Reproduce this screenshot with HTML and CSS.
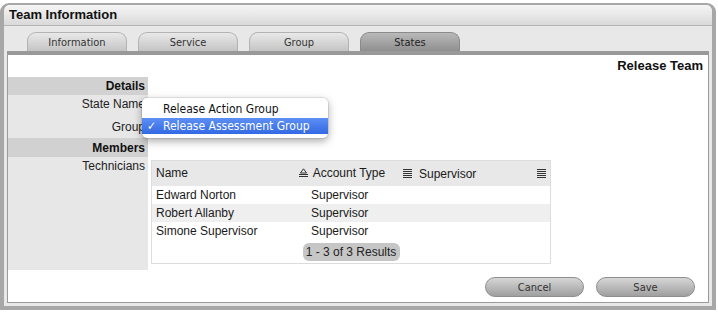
FILE: index.html
```html
<!DOCTYPE html>
<html lang="en">
<head>
    <meta charset="UTF-8">
    <title>Team Information</title>
    <link rel="stylesheet" href="styles.css">
</head>
<body>
    <div class="window">
        <div class="title">Team Information</div>
        <div class="body">
            <div class="tabs">
                <div class="tab">Information</div>
                <div class="tab">Service</div>
                <div class="tab">Group</div>
                <div class="tab active">States</div>
            </div>

            <div class="content">
                <div class="team-name">Release Team</div>

                <div class="form">
                    <div class="label section">Details</div>
                    <div class="value"></div>

                    <div class="label row-name">State Name</div>
                    <div class="value"></div>

                    <div class="label row-group">Group</div>
                    <div class="value"></div>

                    <div class="label section">Members</div>
                    <div class="value"></div>

                    <div class="label row-tech">Technicians</div>
                    <div class="value">
                        <div class="grid">
                            <div class="grid-head">
                                <div class="cell">Name</div>
                                <div class="cell">
                                    <svg class="icon" width="9" height="9" viewBox="0 0 9 9">
                                        <path d="M4.5 0.8 L7.6 5 L1.4 5 Z" fill="none" stroke="#333" stroke-width="1"/>
                                        <path d="M0 6.5 H9 M0 8.5 H9" stroke="#333" stroke-width="1"/>
                                    </svg>
                                    Account Type
                                </div>
                                <div class="cell">
                                    <svg class="icon" width="9" height="9" viewBox="0 0 9 9">
                                        <path d="M0 0.5 H9 M0 2.5 H9 M0 4.5 H9 M0 6.5 H9 M0 8.5 H9" stroke="#333" stroke-width="1"/>
                                    </svg>
                                    <span>Supervisor</span>
                                    <svg class="icon menu-icon" width="9" height="9" viewBox="0 0 9 9">
                                        <path d="M0 0.5 H9 M0 2.5 H9 M0 4.5 H9 M0 6.5 H9 M0 8.5 H9" stroke="#333" stroke-width="1"/>
                                    </svg>
                                </div>
                            </div>
                            <div class="grid-row">
                                <div class="cell">Edward Norton</div>
                                <div class="cell">Supervisor</div>
                                <div class="cell"></div>
                            </div>
                            <div class="grid-row alt">
                                <div class="cell">Robert Allanby</div>
                                <div class="cell">Supervisor</div>
                                <div class="cell"></div>
                            </div>
                            <div class="grid-row">
                                <div class="cell">Simone Supervisor</div>
                                <div class="cell">Supervisor</div>
                                <div class="cell"></div>
                            </div>
                            <div class="pager">
                                <span class="pill">1 - 3 of 3 Results</span>
                            </div>
                        </div>
                    </div>
                </div>

                <div class="actions">
                    <button class="btn">Cancel</button>
                    <button class="btn">Save</button>
                </div>

                <div class="menu">
                    <div class="menu-item">Release Action Group</div>
                    <div class="menu-item selected"><span class="check">✓</span>Release Assessment Group</div>
                </div>
            </div>
        </div>
    </div>
</body>
</html>
```

FILE: styles.css
```css
body {
    margin: 0;
    background: #ffffff;
    font-family: "Liberation Sans", Arial, sans-serif;
    font-size: 12px;
    color: #1a1a1a;
}

.window {
    margin: 3px 2px 2px 0;
    border: 4px solid #a7a7a7;
    border-top-width: 2px;
    border-radius: 9px 9px 0 0;
    background: #e8e8e8;
}

.title {
    height: 20px;
    line-height: 20px;
    padding-left: 5px;
    font-size: 13px;
    font-weight: bold;
    color: #111;
    background: linear-gradient(#f6f6f6, #d9d9d9);
    border-bottom: 1px solid #b4b4b4;
    border-radius: 6px 6px 0 0;
}

.body {
    padding: 6px 3px 3px 3px;
}

.tabs {
    display: flex;
    gap: 11px;
    padding-left: 20px;
    height: 19px;
}

.tab {
    width: 100px;
    height: 19px;
    line-height: 20px;
    text-align: center;
    font-family: "DejaVu Sans Condensed", "DejaVu Sans", sans-serif;
    font-size: 11px;
    color: #333;
    background: linear-gradient(#e9e9e9, #c4c4c4);
    border: 1px solid #b3b3b3;
    border-bottom: none;
    border-radius: 9px 9px 0 0;
    box-sizing: border-box;
}

.tab.active {
    background: linear-gradient(#b9b9b9, #8f8f8f);
    border-color: #8a8a8a;
    color: #222;
}

.content {
    position: relative;
    background: #ffffff;
    border: 1px solid #9a9a9a;
    border-top: 4px solid #999999;
}

.team-name {
    height: 22px;
    line-height: 22px;
    text-align: right;
    padding-right: 5px;
    font-size: 13px;
    font-weight: bold;
    color: #111;
}

.form {
    display: grid;
    grid-template-columns: 140px 1fr;
}

.label {
    background: #e7e7e7;
    text-align: right;
    padding-right: 3px;
    color: #222;
}

.label.section {
    background: #d1d1d1;
    font-weight: bold;
    color: #111;
}

.form > .label.section:first-child {
    height: 18px;
    line-height: 19px;
}

.form > .label.section:nth-child(7) {
    height: 19px;
    line-height: 20px;
}

.row-name {
    height: 21px;
    line-height: 19px;
}

.row-group {
    height: 22px;
    line-height: 22px;
}

.row-tech {
    height: 113px;
    line-height: 12px;
    padding-top: 3px;
    box-sizing: border-box;
}

.value {
    padding-left: 3px;
}

.grid {
    width: 400px;
    margin-top: 3px;
    border: 1px solid #dcdcdc;
    box-sizing: border-box;
    height: 104px;
}

.grid-head,
.grid-row {
    display: grid;
    grid-template-columns: 144px 104px 1fr;
}

.grid-head {
    height: 25px;
    line-height: 24px;
    background: #e8e8e8;
}

.grid-row {
    height: 18px;
    line-height: 18px;
}

.grid-row.alt {
    background: #efefef;
}

.cell {
    white-space: nowrap;
}

.cell:first-child {
    padding-left: 4px;
}

.cell:nth-child(2) {
    padding-left: 15px;
}

.grid-head .cell:nth-child(2) {
    padding-left: 3px;
}

.grid-head .cell:nth-child(3) {
    display: flex;
    align-items: center;
    gap: 5px;
    padding-left: 3px;
}

.icon {
    display: inline-block;
    vertical-align: middle;
    margin-right: 2px;
    margin-top: -2px;
}

.grid-head .cell:nth-child(3) .icon {
    margin-top: 0;
}

.grid-head .cell:nth-child(3) .menu-icon {
    margin-left: auto;
    margin-right: 4px;
}

.pager {
    height: 24px;
    display: flex;
    justify-content: center;
    align-items: center;
}

.pill {
    display: inline-block;
    width: 97px;
    height: 18px;
    line-height: 18px;
    text-align: center;
    background: #c6c6c6;
    border-radius: 6px;
    color: #222;
}

.actions {
    height: 32px;
    display: flex;
    justify-content: flex-end;
    gap: 12px;
    padding: 7px 13px 0 0;
    box-sizing: border-box;
}

.btn {
    width: 99px;
    height: 20px;
    padding: 0;
    font-family: "DejaVu Sans Condensed", "DejaVu Sans", sans-serif;
    font-size: 11px;
    color: #333;
    background: linear-gradient(#d6d6d6, #9f9f9f);
    border: 1px solid #8e8e8e;
    border-radius: 10px;
}

.menu {
    position: absolute;
    left: 134px;
    top: 43px;
    width: 186px;
    height: 40px;
    padding-top: 2px;
    box-sizing: border-box;
    background: #ffffff;
    border-radius: 5px;
    box-shadow: 0 3px 9px rgba(0, 0, 0, 0.35), 0 0 0 1px rgba(0, 0, 0, 0.08);
    font-family: "DejaVu Sans Condensed", "DejaVu Sans", sans-serif;
    font-size: 12px;
    color: #111;
}

.menu-item {
    height: 18px;
    line-height: 18px;
    padding-left: 21px;
    position: relative;
}

.menu-item.selected {
    height: 16px;
    line-height: 16px;
    color: #ffffff;
    background: linear-gradient(#5d8ff4, #3369e4);
}

.check {
    position: absolute;
    left: 5px;
    font-weight: bold;
}
```
